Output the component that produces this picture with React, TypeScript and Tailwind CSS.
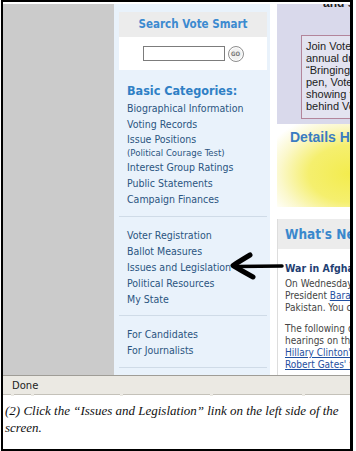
const side = "font-['DejaVu_Sans_Condensed','DejaVu_Sans',sans-serif] font-stretch-condensed";

function NavLink({ children }: { children: React.ReactNode }) {
  return <div className="h-[16px] leading-[16px] text-[10.5px] text-[#2b5581] whitespace-nowrap">{children}</div>;
}

function Divider({ className = "" }: { className?: string }) {
  return <div className={"h-px bg-[#cfdbe7] " + className} />;
}

function Sidebar() {
  return (
    <div className={"w-[156px] bg-[#e9f2fb] pt-[8px] pl-[5px] pr-[3px] " + side}>
      <div className="bg-white">
        <div className="h-[25px] bg-[#ececec] flex items-center justify-center text-[11.5px] font-bold text-[#3c8ad0]">
          Search Vote Smart
        </div>
        <div className="h-[33px] flex items-center justify-center gap-[3px]">
          <div className="w-[82px] h-[15px] border border-[#7c7c7c] bg-white" />
          <div className="w-[16px] h-[16px] rounded-full border border-[#8e8e8e] bg-[#f1f1f1] shadow-[inset_0_0_0_1px_#fff] flex items-center justify-center text-[6px] font-bold text-[#777] leading-none">
            GO
          </div>
        </div>
      </div>
      <div className="pl-[8px] mt-[13px]">
        <div className="h-[17px] leading-[16px] text-[12.5px] font-bold text-[#2f80c5]">Basic Categories:</div>
        <NavLink>Biographical Information</NavLink>
        <NavLink>Voting Records</NavLink>
        <div className="h-[15px] leading-[15px] text-[10.5px] text-[#2b5581]">Issue Positions</div>
        <div className="h-[12px] leading-[12px] text-[9.5px] text-[#2b5581]">(Political Courage Test)</div>
        <NavLink>Interest Group Ratings</NavLink>
        <NavLink>Public Statements</NavLink>
        <NavLink>Campaign Finances</NavLink>
      </div>
      <Divider className="mt-[9px]" />
      <div className="pl-[8px] mt-[10px]">
        <NavLink>Voter Registration</NavLink>
        <NavLink>Ballot Measures</NavLink>
        <NavLink>Issues and Legislation</NavLink>
        <NavLink>Political Resources</NavLink>
        <NavLink>My State</NavLink>
      </div>
      <Divider className="mt-[8px]" />
      <div className="pl-[8px] mt-[10px]">
        <NavLink>For Candidates</NavLink>
        <NavLink>For Journalists</NavLink>
      </div>
      <Divider className="mt-[9px]" />
    </div>
  );
}

function RightColumn() {
  const body = "h-[12px] leading-[12px] text-[10px] text-[#444] whitespace-nowrap";
  const link = "text-[#1f4fa0] underline";
  return (
    <div className="w-[73px] overflow-hidden flex flex-col">
      <div className="h-[120px] bg-[#d9d9eb] font-['Liberation_Sans',Arial,sans-serif]">
        <div className="h-[8px] overflow-hidden pl-[46px]">
          <div className="-mt-[8px] text-[12px] font-bold leading-[14px] text-[#222] whitespace-nowrap">and share</div>
        </div>
        <div className="ml-[24px] mt-[23px] w-[120px] h-[84px] border border-[#b3859b] bg-[#e3e3f0] pl-[4px] pt-[4px] text-[11px] leading-[12px] text-[#1c1c1c] whitespace-nowrap">
          <div>Join Vote Smart at our</div>
          <div>annual dues drive,</div>
          <div>“Bringing Light,”</div>
          <div>pen, Vote Smart</div>
          <div>showing the people</div>
          <div>behind Vote Smart</div>
        </div>
      </div>
      <div className="h-[83px] bg-[radial-gradient(ellipse_at_100%_60%,#f3ec4e_0%,#f5ef6e_40%,#fbf8cc_68%,#ffffff_88%)] font-['Liberation_Sans',Arial,sans-serif] pl-[13px] pt-[6px]">
        <div className="text-[14px] font-bold leading-[14px] text-[#3a7cc2] whitespace-nowrap">Details Here</div>
      </div>
      <div className="h-[12px] bg-white" />
      <div className={"flex-1 border-l border-[#dddddd] bg-white " + side}>
        <div className="h-[30px] bg-[#ececec] pl-[7px] flex items-center text-[13.5px] font-bold text-[#3a88cc] whitespace-nowrap">
          What's New
        </div>
        <div className="pl-[7px] pt-[12px]">
          <div className="h-[14px] leading-[14px] text-[10.5px] font-bold text-[#1f3f73] whitespace-nowrap">War in Afghanistan</div>
          <div className="mt-[3px]">
            <div className={body}>On Wednesday, the Senate</div>
            <div className={body}>President <span className={link}>Barack Obama</span></div>
            <div className={body}>Pakistan. You can read</div>
          </div>
          <div className="mt-[9px]">
            <div className={body}>The following day the</div>
            <div className={body}>hearings on the war</div>
            <div className={body}><span className={link}>Hillary Clinton's</span></div>
            <div className={body}><span className={link}>Robert Gates' testimony</span></div>
          </div>
        </div>
      </div>
    </div>
  );
}

function Arrow() {
  return (
    <svg className="absolute left-[225px] top-[250px]" width="56" height="30" viewBox="0 0 56 30">
      <path d="M9 14.5 L54 14" stroke="#000" strokeWidth="3.5" strokeLinecap="round" fill="none" />
      <path d="M22 3 Q12 9 5 13.5 Q14 19 25 25" stroke="#000" strokeWidth="5" strokeLinecap="round" strokeLinejoin="round" fill="none" />
    </svg>
  );
}

export default function App() {
  const segs = [8, 17, 86, 88, 89, 45];
  return (
    <div className="w-[356px] h-[451px] bg-white">
      <div className="ml-[1px] w-[352px] h-[451px] border-2 border-r-[3px] border-black flex flex-col">
        <div className="relative h-[373px] pt-[2px] bg-white flex">
          <div className="w-[111px] bg-[#cbcbcb]" />
          <Sidebar />
          <div className="w-[7px] bg-white" />
          <RightColumn />
          <Arrow />
        </div>
        <div className="h-[21px] bg-[#ebe9e3] border-t border-[#9f9d97] flex flex-col">
          <div className="flex-1 pl-[9px] flex items-center text-[10px] text-[#222] font-['DejaVu_Sans',sans-serif]">Done</div>
          <div className="h-[2px] flex gap-[3px]">
            {segs.map((w, i) => (
              <div key={i} style={{ width: w }} className="h-[2px] border-t border-[#c4c1b9] bg-white" />
            ))}
          </div>
        </div>
        <div className="flex-1 pl-[2px] pt-[6px] font-['Liberation_Serif',serif] italic text-[13px] leading-[17px] text-[#111]">
          <div className="whitespace-nowrap">(2) Click the “Issues and Legislation” link on the left side of the</div>
          <div>screen.</div>
        </div>
      </div>
    </div>
  );
}
